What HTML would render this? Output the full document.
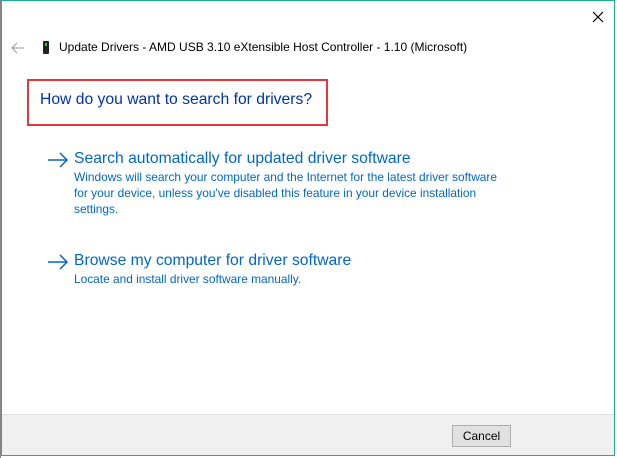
<!DOCTYPE html>
<html><head><style>
*{margin:0;padding:0;box-sizing:border-box}
body{width:617px;height:458px;background:#fff;position:relative;overflow:hidden;font-family:"Liberation Sans",sans-serif}
.win{position:absolute;left:1px;top:0;width:614px;height:456px;border:1px solid #1aae9a;background:#fff}
.t{position:absolute;white-space:nowrap}
.foot{position:absolute;left:0;right:0;top:413px;bottom:0;background:#f0f0f0;border-top:1px solid #dfdfdf}
.btn{position:absolute;left:450px;top:10px;width:59px;height:22px;border:1px solid #adadad;background:#e1e1e1;font-size:12px;text-align:center;line-height:20px;color:#000}
.link{color:#0066cc;font-size:15.7px}
.desc{color:#0066cc;font-size:11.9px;line-height:16px}
svg{position:absolute}
</style></head><body>
<div style="position:absolute;left:0;top:0;width:1px;height:458px;background:#888"></div>
<div class="win">
 <svg style="left:590px;top:10px" width="12" height="12"><path d="M1 1L11 11M11 1L1 11" stroke="#000" stroke-width="1.2"/></svg>
 <svg style="left:9px;top:41px" width="14" height="12"><path d="M1 6H13M6 1L1 6L6 11" stroke="#aaa" stroke-width="1.3" fill="none"/></svg>
 <div style="position:absolute;left:41px;top:40px;width:6px;height:13px;background:#222;border-radius:1px"><div style="width:2px;height:3px;background:#3c3;margin:2px auto"></div></div>
 <div class="t" style="left:57px;top:39px;font-size:12px;color:#000">Update Drivers - AMD USB 3.10 eXtensible Host Controller - 1.10 (Microsoft)</div>
 <div style="position:absolute;left:25px;top:78px;width:301px;height:47px;border:2px solid #e8363b"></div>
 <div class="t" style="left:38px;top:90px;font-size:15.7px;color:#0033aa">How do you want to search for drivers?</div>
 <svg style="left:45px;top:151px" width="22" height="16"><path d="M1 8H20M13 1L20 8L13 15" stroke="#0066cc" stroke-width="1.5" fill="none"/></svg>
 <div class="t link" style="left:72px;top:149px">Search automatically for updated driver software</div>
 <div class="t desc" style="left:72px;top:168px">Windows will search your computer and the Internet for the latest driver software<br>for your device, unless you've disabled this feature in your device installation<br>settings.</div>
 <svg style="left:45px;top:253px" width="22" height="16"><path d="M1 8H20M13 1L20 8L13 15" stroke="#0066cc" stroke-width="1.5" fill="none"/></svg>
 <div class="t link" style="left:72px;top:251px">Browse my computer for driver software</div>
 <div class="t desc" style="left:72px;top:270px">Locate and install driver software manually.</div>
 <div class="foot"><div class="btn">Cancel</div></div>
</div>
</body></html>
